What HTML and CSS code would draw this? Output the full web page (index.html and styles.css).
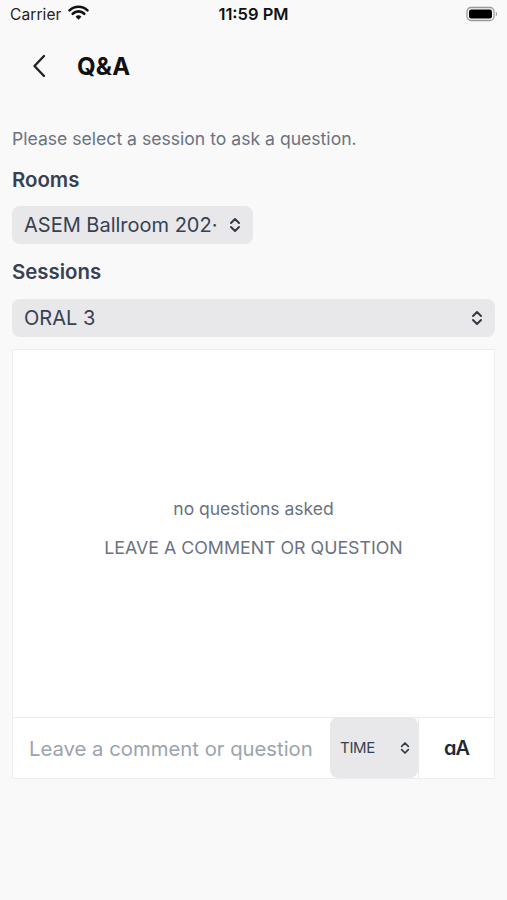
FILE: index.html
```html
<!DOCTYPE html>
<html>
<head>
<meta charset="utf-8">
<link rel="stylesheet" href="styles.css">
</head>
<body>
<div class="status">
  <div class="status-left">
    <span class="carrier">Carrier</span>
    <svg class="wifi" width="21" height="16" viewBox="0 0 20 15">
      <path d="M10 14 L7.2 11 A4 4 0 0 1 12.8 11 Z" fill="#111"/>
      <path d="M4.5 8.2 A7.8 7.8 0 0 1 15.5 8.2" fill="none" stroke="#111" stroke-width="2.5" stroke-linecap="round"/>
      <path d="M1.5 5 A12.2 12.2 0 0 1 18.5 5" fill="none" stroke="#111" stroke-width="2.5" stroke-linecap="round"/>
    </svg>
  </div>
  <span class="time">11:59 PM</span>
  <div class="status-right">
    <svg width="32" height="16" viewBox="0 0 32 16">
      <rect x="1" y="1.5" width="27" height="13" rx="4" fill="none" stroke="#9a9a9a" stroke-width="1.3"/>
      <rect x="3" y="3.5" width="23" height="9" rx="2.2" fill="#000"/>
      <path d="M29.8 5.8 A2.2 2.4 0 0 1 29.8 10.2 Z" fill="#9a9a9a"/>
    </svg>
  </div>
</div>

<header class="header">
  <svg class="back" width="16" height="24" viewBox="0 0 16 24">
    <path d="M13 2 L3.5 12 L13 22" fill="none" stroke="#222" stroke-width="2.4" stroke-linecap="round" stroke-linejoin="round"/>
  </svg>
  <h1 class="title">Q&amp;A</h1>
</header>

<main class="main">
  <p class="intro">Please select a session to ask a question.</p>
  <h2 class="label rooms-label">Rooms</h2>
  <div class="select select-room">
    <span class="select-text">ASEM Ballroom 202·</span>
    <svg class="updown" width="12" height="16" viewBox="0 0 12 16"><path d="M2 6 L6 2 L10 6 M2 10 L6 14 L10 10" fill="none" stroke="#333a45" stroke-width="2" stroke-linecap="round" stroke-linejoin="round"/></svg>
  </div>
  <h2 class="label sessions-label">Sessions</h2>
  <div class="select select-session">
    <span class="select-text">ORAL 3</span>
    <svg class="updown" width="12" height="16" viewBox="0 0 12 16"><path d="M2 6 L6 2 L10 6 M2 10 L6 14 L10 10" fill="none" stroke="#333a45" stroke-width="2" stroke-linecap="round" stroke-linejoin="round"/></svg>
  </div>

  <section class="panel">
    <div class="empty">
      <p class="empty-text">no questions asked</p>
      <p class="empty-cta">LEAVE A COMMENT OR QUESTION</p>
    </div>
    <div class="composer">
      <div class="input">Leave a comment or question</div>
      <div class="sort">
        <span class="sort-text">TIME</span>
        <svg class="updown small" width="10" height="14" viewBox="0 0 12 16"><path d="M2 6 L6 2 L10 6 M2 10 L6 14 L10 10" fill="none" stroke="#333a45" stroke-width="2" stroke-linecap="round" stroke-linejoin="round"/></svg>
      </div>
      <div class="font-btn">aA</div>
    </div>
  </section>
</main>
</body>
</html>
```

FILE: styles.css
```css
* { box-sizing: border-box; }
html, body { margin: 0; padding: 0; }
body {
  background: #f9f9f9;
  font-family: Inter, "Noto Sans", sans-serif;
  color: #374151;
  width: 507px;
  height: 900px;
  overflow: hidden;
}
.status {
  height: 28px;
  display: flex;
  align-items: center;
  justify-content: space-between;
  padding: 0 9px 0 10px;
  position: relative;
}
.status-left { display: flex; align-items: center; gap: 6px; }
.carrier { font-size: 15.5px; color: #222; letter-spacing: 0.1px; }
.wifi { margin-top: -2px; }
.time {
  position: absolute;
  left: 0; right: 0;
  text-align: center;
  font-size: 16.5px;
  font-weight: 600;
  color: #111;
  pointer-events: none;
}
.status-right { display: flex; align-items: center; }

.header {
  height: 76px;
  display: flex;
  align-items: center;
  padding-left: 31px;
}
.title {
  margin: 0 0 0 30px;
  font-size: 24px;
  font-weight: 700;
  color: #111;
  letter-spacing: 0.2px;
}

.main { padding: 0 12px; }
.intro {
  margin: 23px 0 0;
  font-size: 17.6px;
  line-height: 24px;
  color: #6b7280;
}
.label {
  margin: 0;
  font-size: 20.4px;
  line-height: 26px;
  font-weight: 600;
  color: #374151;
}
.rooms-label { margin-top: 16px; }
.sessions-label { margin-top: 15px; }
.select {
  height: 38px;
  background: #e8e8ea;
  border-radius: 8px;
  display: flex;
  align-items: center;
  justify-content: space-between;
  padding: 0 12px;
}
.select-room { width: 241px; margin-top: 13px; }
.select-session { width: 100%; margin-top: 14px; }
.select-text { font-size: 20px; color: #374151; white-space: nowrap; overflow: hidden; }
.select-room .select-text { width: 194px; }
.updown { flex: none; }

.panel {
  margin-top: 12px;
  height: 430px;
  background: #fff;
  border: 1px solid #ececec;
  display: flex;
  flex-direction: column;
}
.empty {
  flex: 1;
  display: flex;
  flex-direction: column;
  align-items: center;
  justify-content: center;
  padding-bottom: 11px;
}
.empty-text, .empty-cta {
  margin: 0;
  font-size: 17.5px;
  line-height: 22px;
  color: #6b7280;
}
.empty-cta { margin-top: 17px; font-size: 17.8px; }
.composer {
  height: 61px;
  display: flex;
  border-top: 1px solid #ececec;
}
.input {
  width: 317px;
  display: flex;
  align-items: center;
  padding-left: 16px;
  font-size: 20.3px;
  color: #9ca3af;
  white-space: nowrap;
  overflow: hidden;
}
.sort {
  width: 88px;
  margin-top: -1px;
  background: #e8e8ea;
  border-radius: 8px;
  display: flex;
  align-items: center;
  justify-content: space-between;
  padding: 0 8px 0 10px;
}
.sort-text { font-size: 15px; color: #374151; letter-spacing: -0.3px; }
.font-btn {
  flex: 1;
  border-left: 1px solid #ececec;
  display: flex;
  align-items: center;
  justify-content: center;
  font-size: 20px;
  font-weight: 600;
  color: #1f2937;
  font-feature-settings: "cv11" 1;
  letter-spacing: -1px;
}
```
